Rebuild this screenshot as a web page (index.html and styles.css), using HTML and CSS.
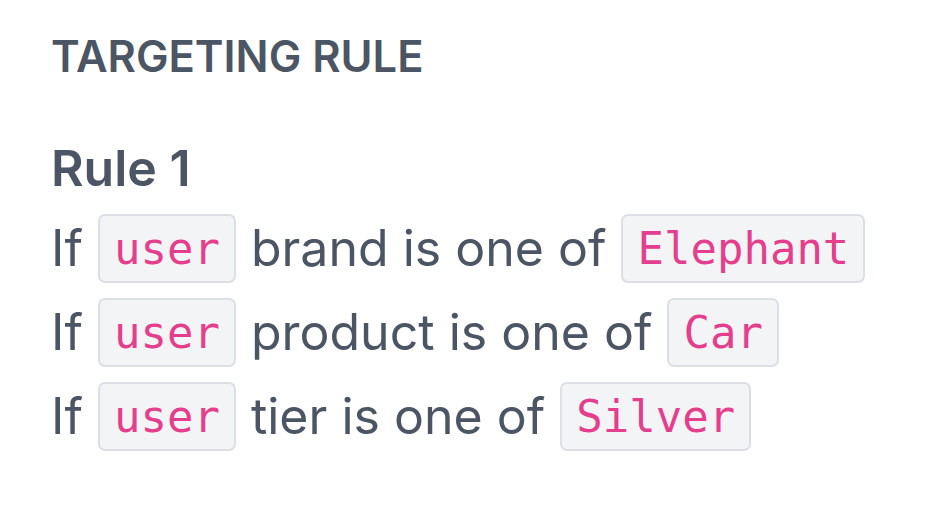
FILE: index.html
```html
<!DOCTYPE html>
<html lang="en">
<head>
<meta charset="utf-8">
<title>Targeting rule</title>
<link rel="stylesheet" href="styles.css">
</head>
<body>
<section class="panel">
  <h2 class="panel-title">TARGETING RULE</h2>
  <h3 class="rule-title">Rule 1</h3>
  <div class="conditions">
    <div class="condition"><span>If</span><code class="chip">user</code><span>brand is one of</span><code class="chip">Elephant</code></div>
    <div class="condition"><span>If</span><code class="chip">user</code><span>product is one of</span><code class="chip">Car</code></div>
    <div class="condition"><span>If</span><code class="chip">user</code><span>tier is one of</span><code class="chip">Silver</code></div>
  </div>
</section>
</body>
</html>
```

FILE: styles.css
```css
html, body {
  margin: 0;
  padding: 0;
  background: #ffffff;
}

body {
  font-family: "Inter", "Liberation Sans", sans-serif;
  color: #4b5563;
}

.panel {
  padding: 30px 51px;
}

.panel-title {
  margin: 0;
  font-size: 43.5px;
  font-weight: 600;
  line-height: 52px;
  color: #4b5563;
}

.rule-title {
  margin: 55px 0 0 0;
  font-size: 50px;
  font-weight: 600;
  line-height: 62px;
  color: #4b5563;
}

.conditions {
  display: flex;
  flex-direction: column;
  gap: 15px;
  margin-top: 15px;
}

.condition {
  display: flex;
  align-items: center;
  gap: 15px;
  font-size: 50px;
  line-height: 69px;
}

.chip {
  font-family: "DejaVu Sans Mono", "Liberation Mono", monospace;
  font-size: 44px;
  line-height: 65px;
  color: #e43f8c;
  background: #f3f4f6;
  border: 2px solid #dcdfe4;
  border-radius: 7px;
  padding: 0 14px;
}
```
